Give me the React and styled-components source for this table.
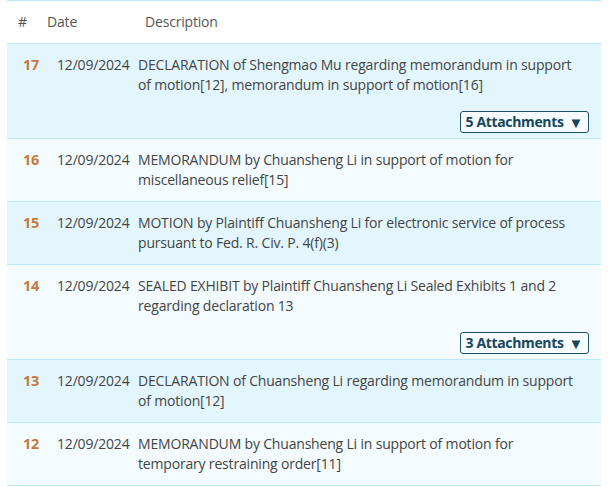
import React from 'react'
import styled, { createGlobalStyle } from 'styled-components'

const Global = createGlobalStyle`
  body {
    margin: 0;
    background: #fff;
    font-family: "Open Sans", "Noto Sans", sans-serif;
  }
`

const Table = styled.div`
  margin: 0 7px;
  width: 594px;
  border-top: 1px solid #bde8f8;
  color: #444;
  font-size: 14px;
  line-height: 20px;
  letter-spacing: -0.18px;
`

const Header = styled.div`
  height: 42px;
  display: flex;
  align-items: center;
  color: #555;
  border-bottom: 1px solid #bde8f8;
  & > span:nth-child(1) { padding-left: 11px; width: 29px; }
  & > span:nth-child(2) { width: 98px; }
`

const Row = styled.div`
  background: ${p => (p.$odd ? '#e3f6fd' : '#f3fbfe')};
  border-bottom: 1px solid #bde8f8;
  padding: 11px 0 ${p => (p.$attach ? '5px' : '11px')};
`

const Cells = styled.div`
  display: grid;
  grid-template-columns: 50px 81px 444px;
`

const Num = styled.span`
  padding-left: 16px;
  font-size: 14.5px;
  font-weight: 700;
  color: #c47b3c;
`

const Desc = styled.span``

const AttachBar = styled.div`
  display: flex;
  justify-content: flex-end;
  padding: 16px 12px 0 0;
`

const AttachButton = styled.button`
  display: flex;
  align-items: center;
  gap: 5px;
  font-family: inherit;
  font-size: 14px;
  font-weight: 700;
  line-height: 20px;
  letter-spacing: -0.35px;
  color: #17475c;
  background: #f6fbfd;
  border: 1px solid #1d4f66;
  border-radius: 3px;
  padding: 0 5px 0 4px;
  cursor: pointer;
`

const Caret = styled.span`
  font-size: 15px;
  line-height: 20px;
`

const entries = [
  { n: 17, text: 'DECLARATION of Shengmao Mu regarding memorandum in support of motion[12], memorandum in support of motion[16]', attach: 5 },
  { n: 16, text: 'MEMORANDUM by Chuansheng Li in support of motion for miscellaneous relief[15]' },
  { n: 15, text: 'MOTION by Plaintiff Chuansheng Li for electronic service of process pursuant to Fed. R. Civ. P. 4(f)(3)' },
  { n: 14, text: 'SEALED EXHIBIT by Plaintiff Chuansheng Li Sealed Exhibits 1 and 2 regarding declaration 13', attach: 3 },
  { n: 13, text: 'DECLARATION of Chuansheng Li regarding memorandum in support of motion[12]' },
  { n: 12, text: 'MEMORANDUM by Chuansheng Li in support of motion for temporary restraining order[11]' },
]

export default function App() {
  return (
    <>
      <Global />
      <Table>
        <Header>
          <span>#</span>
          <span>Date</span>
          <span>Description</span>
        </Header>
        {entries.map((e, i) => (
          <Row key={e.n} $odd={i % 2 === 0} $attach={!!e.attach}>
            <Cells>
              <Num>{e.n}</Num>
              <span>12/09/2024</span>
              <Desc>{e.text}</Desc>
            </Cells>
            {e.attach && (
              <AttachBar>
                <AttachButton>
                  {e.attach} Attachments <Caret>▼</Caret>
                </AttachButton>
              </AttachBar>
            )}
          </Row>
        ))}
      </Table>
    </>
  )
}
